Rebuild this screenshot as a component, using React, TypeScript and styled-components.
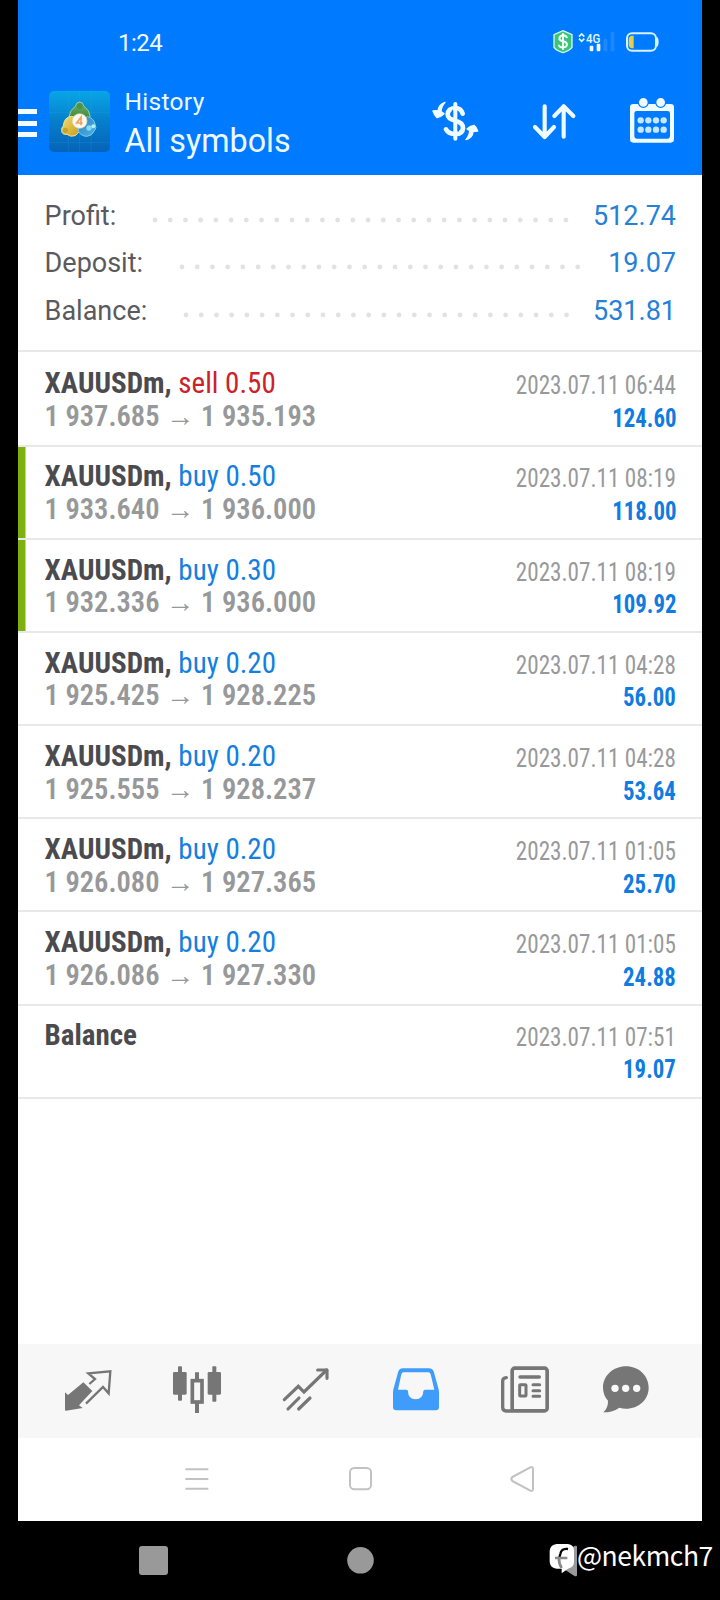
import React from 'react';
import styled, { createGlobalStyle } from 'styled-components';

const Global = createGlobalStyle`
  body { margin: 0; background: #000; font-family: Roboto, sans-serif; }
  * { box-sizing: border-box; }
  svg { display: block; flex: none; }
`;

const Page = styled.div`
  position: relative;
  width: 720px;
  height: 1600px;
  padding: 0 18px;
  background: #000;
  overflow: hidden;
  display: flex;
  flex-direction: column;
`;

const Header = styled.header`
  height: 174.5px;
  background: #007bff;
  color: #eefaff;
`;

const StatusBar = styled.div`
  height: 84px;
  padding: 29px 43px 0 100px;
  display: flex;
  align-items: flex-start;
  justify-content: space-between;
`;

const Clock = styled.span`
  font-size: 24px;
  line-height: 28px;
  letter-spacing: -0.5px;
`;

const AppBar = styled.div`
  height: 90px;
  display: flex;
  align-items: flex-start;
`;

const Burger = styled.div`
  width: 19px;
  margin: 25px 11.5px 0 0;
  display: grid;
  gap: 6.5px;
`;

const BurgerLine = styled.i`
  height: 5px;
  background: #f4fcff;
`;

const Logo = styled.svg`
  margin-top: 7px;
`;

const Titles = styled.div`
  margin: 3px 0 0 15px;
  flex: 1;
`;

const Caption = styled.div`
  font-size: 24.5px;
  line-height: 29px;
  letter-spacing: 0.3px;
`;

const Heading = styled.div`
  margin-top: 4px;
  font-size: 32.3px;
  line-height: 42px;
`;

const Actions = styled.div`
  display: flex;
  gap: 50px;
  margin: 13.3px 26px 0 0;
`;

const Summary = styled.section`
  height: 177.5px;
  padding: 16.5px 26px 0;
  background: #fff;
  border-bottom: 2px solid #e8e8e9;
`;

const SummaryRow = styled.div`
  display: flex;
  align-items: center;
  height: 47.6px;
  font-size: 27px;
`;

const SummaryLabel = styled.span`
  color: #5a5a5e;
  padding: 2px 0 0 0.6px;
`;

const Dots = styled.svg`
  && { flex: 1; }
  min-width: 0;
  height: 6px;
  margin: 10px 21px 0 36px;
`;

const SummaryValue = styled.span`
  padding-top: 2px;
  color: #2580d8;
`;

const Deals = styled.section`
  background: #fff;
  height: 992px;
`;

const Deal = styled.article<{ $first?: boolean; $marked?: boolean }>`
  height: ${(p) => (p.$first ? 94.7 : 93.15)}px;
  padding: ${(p) => (p.$first ? 15.4 : 13.8)}px 26px 0;
  border-bottom: 2px solid #e8e8e9;
  ${(p) => p.$marked && 'box-shadow: inset 7.5px 0 #80b010;'}
`;

const DealLine = styled.div`
  display: flex;
  align-items: baseline;
  justify-content: space-between;
  height: 32.6px;
  line-height: 33px;
  white-space: pre;
  font-stretch: 75%;
`;

const Symbol = styled.span`
  padding-left: 0.6px;
  font-size: 29px;
  font-weight: 700;
  color: #4b4b4f;
`;

const Side = styled.span<{ $sell?: boolean }>`
  font-weight: 400;
  color: ${(p) => (p.$sell ? '#cc2229' : '#147fe0')};
`;

const Prices = styled.span`
  padding-left: 0.6px;
  font-size: 29.3px;
  font-weight: 600;
  color: #97989a;
  transform: scaleX(0.972);
  transform-origin: left;
`;

const Stamp = styled.time`
  font-size: 25px;
  color: #98999b;
  transform: translateY(0.8px) scaleX(0.926);
  transform-origin: right;
`;

const Profit = styled.span`
  font-size: 25px;
  font-weight: 700;
  color: #107be0;
  transform: translateY(0.8px) scaleX(0.912);
  transform-origin: right;
`;

const Tabs = styled.nav`
  height: 93.5px;
  padding: 19.3px 0 0 15.5px;
  background: #f7f7f7;
  display: grid;
  grid-template-columns: 109px 109px 109.5px 109.5px 109.5px 92px;
  justify-items: center;
  align-items: start;
`;

const PhoneNav = styled.nav`
  height: 83.5px;
  padding: 25.5px 0 0 163px;
  background: #fff;
  display: flex;
  gap: 131px;
`;

const SystemNav = styled.nav`
  height: 79px;
  padding: 22px 0 0 117px;
  display: flex;
  gap: 173px;
`;

const Watermark = styled.div`
  position: absolute;
  left: 549px;
  top: 1540px;
  display: flex;
  align-items: flex-start;
  gap: 1px;
  color: #fff;
`;

const Handle = styled.span`
  margin-top: -1.5px;
  font-family: 'Noto Sans CJK SC', 'Noto Sans', sans-serif;
  font-size: 26.5px;
  font-weight: 400;
  line-height: 32px;
  letter-spacing: -0.45px;
`;

const deals = [
  { side: 'sell 0.50', from: '1 937.685', to: '1 935.193', time: '2023.07.11 06:44', profit: '124.60' },
  { side: 'buy 0.50', from: '1 933.640', to: '1 936.000', time: '2023.07.11 08:19', profit: '118.00', marked: true },
  { side: 'buy 0.30', from: '1 932.336', to: '1 936.000', time: '2023.07.11 08:19', profit: '109.92', marked: true },
  { side: 'buy 0.20', from: '1 925.425', to: '1 928.225', time: '2023.07.11 04:28', profit: '56.00' },
  { side: 'buy 0.20', from: '1 925.555', to: '1 928.237', time: '2023.07.11 04:28', profit: '53.64' },
  { side: 'buy 0.20', from: '1 926.080', to: '1 927.365', time: '2023.07.11 01:05', profit: '25.70' },
  { side: 'buy 0.20', from: '1 926.086', to: '1 927.330', time: '2023.07.11 01:05', profit: '24.88' },
];

const summary = [
  ['Profit:', '512.74'],
  ['Deposit:', '19.07'],
  ['Balance:', '531.81'],
];

const StatusIcons = () => (
  <svg width="106" height="26" viewBox="580 90 318 78">
    <path d="M610 95l27 12v38q-6 9-27 16q-21-7-27-16v-38z" fill="#3cc47c" stroke="#d6fbe6" strokeWidth="4" />
    <path d="M622 117q-3-8-12-8t-11 9q0 7 11 9t12 9q0 9-12 9t-12-8M610 103v49" fill="none" stroke="#f1fff5" strokeWidth="6" />
    <path d="M658 113l8-8 8 8M658 119l8 8 8-8" fill="none" stroke="#dff4ff" strokeWidth="5" />
    <text x="679" y="131" fontFamily="Roboto, sans-serif" fontSize="38" fontWeight="500" fill="#e6f7ff" textLength="43" lengthAdjust="spacingAndGlyphs">4G</text>
    <rect x="690" y="140" width="11" height="17" rx="3" fill="#f2fbff" />
    <rect x="711" y="134" width="11" height="23" rx="3" fill="#f2fbff" />
    <rect x="732" y="120" width="11" height="37" rx="3" fill="#1f88ff" />
    <rect x="753" y="99" width="11" height="58" rx="3" fill="#1f88ff" />
    <rect x="802" y="103" width="87" height="52" rx="15" fill="none" stroke="#d9f2ff" strokeWidth="6" />
    <path d="M892 116q5 12 0 26" fill="none" stroke="#d9f2ff" strokeWidth="5" />
    <path d="M822 110v38h-6q-9-2-9-12v-14q0-10 9-12z" fill="#e9cf45" />
  </svg>
);

const AppLogo = () => (
  <Logo width="61" height="61" viewBox="145 273 183 183">
    <defs>
      <linearGradient id="tile" x1="0" y1="0" x2="0" y2="1">
        <stop offset="0" stopColor="#08a6e6" />
        <stop offset=".5" stopColor="#067ecb" />
        <stop offset="1" stopColor="#0563b8" />
      </linearGradient>
      <linearGradient id="green" x1="0" y1="0" x2="0" y2="1">
        <stop offset="0" stopColor="#6fae72" />
        <stop offset="1" stopColor="#2f7f24" />
      </linearGradient>
      <linearGradient id="gold" x1="0" y1="0" x2="1" y2="1">
        <stop offset="0" stopColor="#f0e070" />
        <stop offset="1" stopColor="#c99a1c" />
      </linearGradient>
      <linearGradient id="sky" x1="0" y1="0" x2="1" y2="1">
        <stop offset="0" stopColor="#2c84c4" />
        <stop offset="1" stopColor="#4cb2e2" />
      </linearGradient>
    </defs>
    <rect x="145" y="273" width="183" height="183" rx="15" fill="url(#tile)" />
    <path d="M203 273v183M237 273v183M271 273v183M145 338h183M145 428h183" stroke="#3fb4e4" strokeOpacity=".25" strokeWidth="2" />
    <path d="M237 306q10 0 12 12q18 12 19 30q0 14-12 22h-38q-12-8-12-22q1-18 19-30q2-12 12-12z" fill="url(#green)" stroke="#9ccf94" strokeWidth="3" />
    <circle cx="237" cy="318" r="9" fill="#4a9152" />
    <path d="M213 349q18 2 23 26q4 22-13 32q-14 5-24-4q-16 2-16-12q-1-8 5-13q2-27 25-29z" fill="url(#gold)" stroke="#efe39a" strokeWidth="3" />
    <circle cx="194" cy="391" r="8" fill="#c2a432" />
    <path d="M260 350q20 4 24 25q4 9-2 16q-8 17-22 18q-18 0-26-14q-5-16 6-32z" fill="url(#sky)" stroke="#7cc8ec" strokeWidth="3" />
    <circle cx="265" cy="384" r="8" fill="#86dafa" />
    <circle cx="278" cy="379" r="6" fill="#b4ecfc" />
    <circle cx="237" cy="363" r="22" fill="#fff8ef" stroke="#e6d2ac" strokeWidth="2" />
    <path d="M241 376v-24l-13 17h18" fill="none" stroke="#f0a25e" strokeWidth="5" />
  </Logo>
);

const CurrencyIcon = () => (
  <svg width="48" height="48" viewBox="216 292 144 144" fill="none" stroke="#f0fbff">
    <path d="M286 313v104" strokeWidth="12" strokeLinecap="round" />
    <path d="M308 342q-5-17-22-17q-22 1-23 19q0 14 23 19q23 5 23 22q-1 18-23 18q-20 0-28-14" strokeWidth="14" strokeLinecap="round" />
    <path d="M255 308q-20 8-20 24l-16 2q4 12 12 20q12-3 21-12l-9-6q0-14 12-28z" fill="#f0fbff" strokeWidth="4" strokeLinejoin="round" />
    <path d="M318 420q20-6 21-24l14-2q-3-11-11-17q-12 1-21 11l8 5q0 12-11 27z" fill="#f0fbff" strokeWidth="4" strokeLinejoin="round" />
    <path d="M277 330v22M295 378v18" stroke="#007bff" strokeWidth="3" />
  </svg>
);

const SortIcon = () => (
  <svg width="48" height="48" viewBox="510 292 144 144" fill="none" stroke="#f0fbff" strokeWidth="12.5" strokeLinecap="round" strokeLinejoin="round">
    <path d="M554 320v91M525 382l29 30 28-30M611 411v-91M583 349l28-29 29 29" />
  </svg>
);

const CalendarIcon = () => (
  <svg width="48" height="48" viewBox="804 292 144 144">
    <path fillRule="evenodd" d="M820 313h112q10 0 10 10v96q0 10-10 10H820q-10 0-10-10v-96q0-10 10-10zM830 334q-7 0-7 7v67q0 9 9 9h89q9 0 9-9v-67q0-7-7-7z" fill="#f0fbff" />
    <circle cx="850" cy="308" r="15" fill="#f0fbff" stroke="#007bff" strokeWidth="4" />
    <circle cx="902" cy="308" r="15" fill="#f0fbff" stroke="#007bff" strokeWidth="4" />
    {[362, 390].map((y) => [842, 865, 888, 911].map((x) => <circle key={`${x}-${y}`} cx={x} cy={y} r="9.5" fill="#c8e8ff" />))}
  </svg>
);

const QuotesIcon = () => (
  <svg width="54" height="54" viewBox="183 70 162 162">
    <path d="M195 158l9 8 46-38 27 26-40 43 11 8-50 8q-3 0-3-3z" fill="#767676" />
    <path d="M268 133l17-15-20-17 66-6-5 66-17-19-51 50" fill="none" stroke="#767676" strokeWidth="7" />
  </svg>
);

const ChartIcon = () => (
  <svg width="54" height="54" viewBox="510 70 162 162" fill="#767676">
    <rect x="519" y="97" width="41" height="68" rx="4" />
    <rect x="534" y="80" width="12" height="103" rx="3" />
    <rect x="623" y="97" width="40" height="68" rx="4" />
    <rect x="637" y="80" width="12" height="106" rx="3" />
    <rect x="577" y="123" width="29" height="64" fill="none" stroke="#767676" strokeWidth="11" />
    <path d="M585 98h12v22h-12zM585 190h12v30h-12z" />
  </svg>
);

const TradeIcon = () => (
  <svg width="54" height="54" viewBox="839 70 162 162" fill="none" stroke="#767676" strokeWidth="9.5" strokeLinecap="round">
    <path d="M855 180l42-40 17 17 68-66" />
    <path d="M955 91h28v25" strokeLinejoin="round" />
    <path d="M866 208l33-33M898 208l34-33" />
  </svg>
);

const HistoryIcon = () => (
  <svg width="54" height="54" viewBox="87 70 162 162">
    <path fillRule="evenodd" d="M128 86h79q10 0 14 9l14 51q2 6 2 12v44q0 10-10 10H109q-10 0-10-10v-44q0-6 2-12l14-51q4-9 13-9zM131 98q-5 0-7 6l-10 46h25q5 0 5 5q0 23 23 24q22-1 23-24q0-5 5-5h28l-11-46q-2-6-7-6z" fill="#409cfb" />
  </svg>
);

const NewsIcon = () => (
  <svg width="54" height="54" viewBox="415 70 162 162" fill="none" stroke="#767676" strokeLinecap="round">
    <rect x="457.500" y="85.500" width="105" height="128" rx="8" strokeWidth="11" />
    <path d="M440 114q-11 1-11 10v79q0 11 11 11h20" strokeWidth="10" />
    <path d="M481 112h58" strokeWidth="10" />
    <rect x="480" y="135" width="19" height="34" rx="2" strokeWidth="9" />
    <path d="M520 135h20M520 153h20M520 170h20" strokeWidth="9" />
  </svg>
);

const ChatIcon = () => (
  <svg width="54" height="54" viewBox="716 70 162 162">
    <path d="M797 80c38 0 68 28 68 64s-30 63-68 63q-10 0-20-3-19 14-48 14 15-14 14-35-15-17-15-39c0-36 31-64 69-64z" fill="#767676" />
    {[764, 796, 829].map((x) => <circle key={x} cx={x} cy="146" r="11" fill="#fafafa" />)}
  </svg>
);

export default function App() {
  return (
    <Page>
      <Global />
      <Header>
        <StatusBar>
          <Clock>1:24</Clock>
          <StatusIcons />
        </StatusBar>
        <AppBar>
          <Burger><BurgerLine /><BurgerLine /><BurgerLine /></Burger>
          <AppLogo />
          <Titles>
            <Caption>History</Caption>
            <Heading>All symbols</Heading>
          </Titles>
          <Actions>
            <CurrencyIcon />
            <SortIcon />
            <CalendarIcon />
          </Actions>
        </AppBar>
      </Header>
      <Summary>
        {summary.map(([label, value]) => (
          <SummaryRow key={label}>
            <SummaryLabel>{label}</SummaryLabel>
            <Dots>
              <line x1="3" y1="3" x2="100%" y2="3" stroke="#e2e2e4" strokeWidth="4.8" strokeLinecap="round" strokeDasharray="0 15.22" />
            </Dots>
            <SummaryValue>{value}</SummaryValue>
          </SummaryRow>
        ))}
      </Summary>
      <Deals>
        {deals.map((d, i) => (
          <Deal key={i} $first={i === 0} $marked={d.marked}>
            <DealLine>
              <Symbol>XAUUSDm, <Side $sell={i === 0}>{d.side}</Side></Symbol>
              <Stamp>{d.time}</Stamp>
            </DealLine>
            <DealLine>
              <Prices>{d.from} → {d.to}</Prices>
              <Profit>{d.profit}</Profit>
            </DealLine>
          </Deal>
        ))}
        <Deal>
          <DealLine>
            <Symbol>Balance</Symbol>
            <Stamp>2023.07.11 07:51</Stamp>
          </DealLine>
          <DealLine>
            <span />
            <Profit>19.07</Profit>
          </DealLine>
        </Deal>
      </Deals>
      <Tabs>
        <QuotesIcon />
        <ChartIcon />
        <TradeIcon />
        <HistoryIcon />
        <NewsIcon />
        <ChatIcon />
      </Tabs>
      <PhoneNav>
        <svg width="32" height="32" viewBox="543 370 96 96" stroke="#c2c2c2" strokeWidth="6">
          <path d="M556 389h69M556 418h69M556 447h69" />
        </svg>
        <svg width="32" height="32" viewBox="1032 370 96 96" fill="none" stroke="#c2c2c2" strokeWidth="6">
          <rect x="1050" y="385" width="63" height="64" rx="13" />
        </svg>
        <svg width="32" height="32" viewBox="441 370 96 96" fill="none" stroke="#c2c2c2" strokeWidth="6" strokeLinejoin="round">
          <path d="M457 412l54-29q8-3 8 5v60q0 8-8 5l-54-29q-6-6 0-12z" />
        </svg>
      </PhoneNav>
      <SystemNav>
        <svg width="34" height="34" viewBox="0 0 34 34"><rect x="4" y="3" width="29" height="29" rx="3" fill="#999" /></svg>
        <svg width="34" height="34" viewBox="0 0 34 34"><circle cx="18.5" cy="17.3" r="13.3" fill="#999" /></svg>
        <svg width="34" height="34" viewBox="0 0 34 34"><path d="M1.500 17.500L25.500 3q2.500-1 2.500 1v28q0 2-2.500 1z" fill="#999" /></svg>
      </SystemNav>
      <Watermark>
        <svg width="27" height="34" viewBox="567 600 81 102">
          <path d="M590 612h34q18 2 18 20v34q-1 17-18 20l-19 14v-14h-15q-19-2-21-20v-34q2-18 21-20z" fill="#fff" />
          <path d="M624 627q-20-3-23 15l-4 14" fill="none" stroke="#000" strokeWidth="7" />
          <path d="M585 654h37M597 654q-1 16 8 30" fill="none" stroke="#8a8a8a" strokeWidth="8" />
        </svg>
        <Handle>@nekmch7</Handle>
      </Watermark>
    </Page>
  );
}
